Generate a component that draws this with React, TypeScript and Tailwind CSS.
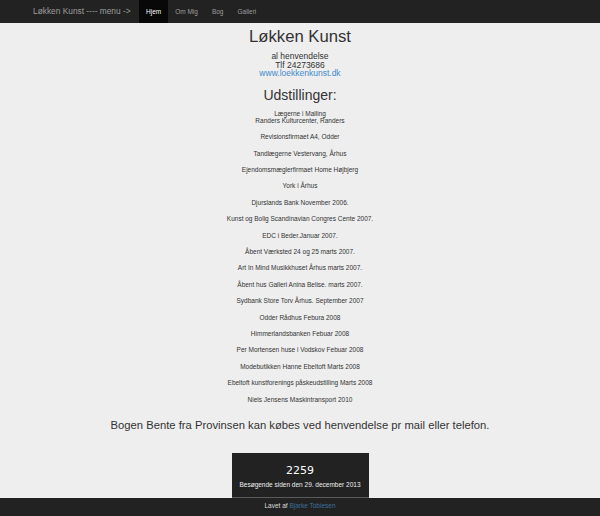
const EXHIBITIONS: string[][] = [
  ['Lægerne i Malling', 'Randers Kulturcenter, Randers'],
  ['Revisionsfirmaet A4, Odder'],
  ['Tandlægerne Vestervang, Århus'],
  ['Ejendomsmæglerfirmaet Home Højbjerg'],
  ['York i Århus'],
  ['Djurslands Bank November 2006.'],
  ['Kunst og Bolig Scandinavian Congres Cente 2007.'],
  ['EDC i Beder.Januar 2007.'],
  ['Åbent Værksted 24 og 25 marts 2007.'],
  ['Art In Mind Musikkhuset Århus marts 2007.'],
  ['Åbent hus Galleri Anina Belise. marts 2007.'],
  ['Sydbank Store Torv Århus. September 2007'],
  ['Odder Rådhus Febura 2008'],
  ['Himmerlandsbanken Febuar 2008'],
  ['Per Mortensen huse i Vodskov Febuar 2008'],
  ['Modebutikken Hanne Ebeltoft Marts 2008'],
  ['Ebeltoft kunstforenings påskeudstilling Marts 2008'],
  ['Niels Jensens Maskintransport 2010'],
]

const NAV = [
  { label: 'Hjem', active: true },
  { label: 'Om Mig', active: false },
  { label: 'Bog', active: false },
  { label: 'Galleri', active: false },
]

export default function App() {
  return (
    <div className="h-[516px] overflow-hidden bg-[#eeeeee] font-['Liberation_Sans',Arial,sans-serif] text-[#333333] flex flex-col">
      {/* Navbar */}
      <nav className="h-[23px] shrink-0 bg-[#222222] flex items-stretch">
        <div className="w-[106px] ml-[33px] flex items-center text-[8.35px] text-[#9d9d9d] whitespace-nowrap">
          Løkken Kunst ---- menu -&gt;
        </div>
        <ul className="flex items-stretch">
          {NAV.map((n) => (
            <li
              key={n.label}
              className={
                n.active
                  ? 'px-[7px] flex items-center text-[6.5px] text-white bg-[#080808]'
                  : 'px-[7px] flex items-center text-[6.5px] text-[#9d9d9d]'
              }
            >
              {n.label}
            </li>
          ))}
        </ul>
      </nav>

      {/* Content */}
      <main className="flex-1 flex flex-col items-center text-center">
        <h1 className="mt-[5px] text-[16.7px] leading-[18px]">Løkken Kunst</h1>
        <div className="mt-[6px] text-[8.5px] leading-[8.5px]">
          <div>al henvendelse</div>
          <div>Tlf 24273686</div>
          <a className="text-[#428bca]">www.loekkenkunst.dk</a>
        </div>
        <h2 className="mt-[10px] text-[14px] leading-[15.4px]">Udstillinger:</h2>

        <div className="mt-[7px] flex flex-col gap-[9.4px] text-[6.5px] leading-[7px]">
          {EXHIBITIONS.map((lines) => (
            <p key={lines[0]}>
              {lines.map((l) => (
                <span key={l} className="block">{l}</span>
              ))}
            </p>
          ))}
        </div>

        <h3 className="mt-[16.5px] text-[11.25px] leading-[12.4px]">
          Bogen Bente fra Provinsen kan købes ved henvendelse pr mail eller telefon.
        </h3>

        <div className="mt-auto w-[137px] h-[45px] bg-[#222222] border-b border-[#5a5a5a] text-white flex flex-col items-center">
          <div className="mt-[11px] text-[11px] leading-[13px] font-['DejaVu_Sans',sans-serif]">2259</div>
          <div className="mt-[4px] text-[6.5px] leading-[7px] text-[#eeeeee]">Besøgende siden den 29. december 2013</div>
        </div>
      </main>

      {/* Footer */}
      <footer className="h-[18px] shrink-0 bg-[#222222] text-center text-[6.5px] leading-[7px] pt-[3.5px]">
        <span className="text-[#dddddd]">Lavet af </span>
        <a className="text-[#3d6f9c]">Bjarke Tobiesen</a>
      </footer>
    </div>
  )
}
